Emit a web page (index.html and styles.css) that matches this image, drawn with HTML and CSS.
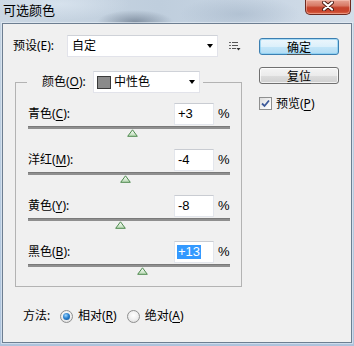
FILE: index.html
```html
<!DOCTYPE html>
<html lang="zh-CN">
<head>
<meta charset="utf-8">
<title>可选颜色</title>
<link rel="stylesheet" href="styles.css">
</head>
<body>
<div class="window">
  <div class="titlebar">
    <span class="title">可选颜色</span>
    <div class="close">
      <svg width="12" height="10" viewBox="0 0 12 10">
        <path d="M2 1.5 L10 8.5 M10 1.5 L2 8.5" stroke="#4a1a12" stroke-width="4" stroke-linecap="round"/>
        <path d="M2 1.5 L10 8.5 M10 1.5 L2 8.5" stroke="#ffffff" stroke-width="2.2" stroke-linecap="round"/>
      </svg>
    </div>
  </div>
  <div class="client">
    <div class="main">
      <div class="left">
        <div class="preset-row">
          <span class="preset-label">预设(E):</span>
          <div class="select preset-select"><span class="select-text">自定</span><span class="arrow"></span></div>
          <svg class="menu-icon" width="12" height="9" viewBox="0 0 12 9">
            <rect x="0" y="0" width="2" height="1" fill="#666"/><rect x="3" y="0" width="6" height="1" fill="#555"/>
            <rect x="0" y="3" width="2" height="1" fill="#666"/><rect x="3" y="3" width="6" height="1" fill="#555"/>
            <rect x="0" y="6" width="2" height="1" fill="#666"/><rect x="3" y="6" width="4" height="1" fill="#555"/>
            <path d="M7.5 6 L11.5 6 L9.5 8.5 Z" fill="#333"/>
          </svg>
        </div>
        <fieldset class="group">
          <legend class="group-legend">
            <span class="legend-label">颜色(<u>O</u>):</span>
            <div class="select color-select">
              <span class="swatch"></span><span class="select-text">中性色</span><span class="arrow"></span>
            </div>
          </legend>
          <div class="row">
            <div class="row-top"><span class="row-label">青色(<u>C</u>):</span><div class="num">+3</div><span class="pct">%</span></div>
            <div class="track"></div>
            <svg class="thumb" style="margin-left:98.5px" width="11" height="8" viewBox="0 0 11 8"><defs><linearGradient id="g1" x1="0" y1="0" x2="0" y2="1"><stop offset="0" stop-color="#ffffff"/><stop offset="1" stop-color="#b7d9b2"/></linearGradient></defs><path d="M5.5 0.8 L10.3 7.3 L0.7 7.3 Z" fill="url(#g1)" stroke="#4f8a4f" stroke-width="1"/></svg>
          </div>
          <div class="row">
            <div class="row-top"><span class="row-label">洋红(<u>M</u>):</span><div class="num">-4</div><span class="pct">%</span></div>
            <div class="track"></div>
            <svg class="thumb" style="margin-left:91.5px" width="11" height="8" viewBox="0 0 11 8"><path d="M5.5 0.8 L10.3 7.3 L0.7 7.3 Z" fill="url(#g1)" stroke="#4f8a4f" stroke-width="1"/></svg>
          </div>
          <div class="row">
            <div class="row-top"><span class="row-label">黄色(<u>Y</u>):</span><div class="num">-8</div><span class="pct">%</span></div>
            <div class="track"></div>
            <svg class="thumb" style="margin-left:87.4px" width="11" height="8" viewBox="0 0 11 8"><path d="M5.5 0.8 L10.3 7.3 L0.7 7.3 Z" fill="url(#g1)" stroke="#4f8a4f" stroke-width="1"/></svg>
          </div>
          <div class="row last">
            <div class="row-top"><span class="row-label">黑色(<u>B</u>):</span><div class="num"><span class="sel">+13</span></div><span class="pct">%</span></div>
            <div class="track"></div>
            <svg class="thumb" style="margin-left:108.6px" width="11" height="8" viewBox="0 0 11 8"><path d="M5.5 0.8 L10.3 7.3 L0.7 7.3 Z" fill="url(#g1)" stroke="#4f8a4f" stroke-width="1"/></svg>
          </div>
        </fieldset>
        <div class="method">
          <span class="method-label">方法:</span>
          <span class="radio checked"><span class="dot"></span></span>
          <span class="radio-label">相对(<u>R</u>)</span>
          <span class="radio"></span>
          <span class="radio-label">绝对(<u>A</u>)</span>
        </div>
      </div>
      <div class="right">
        <div class="btn default"><span class="btn-text">确定</span></div>
        <div class="btn"><span class="btn-text">复位</span></div>
        <div class="check-row">
          <span class="checkbox">
            <svg width="9" height="9" viewBox="0 0 9 9"><path d="M1 4.5 L3.5 7 L8 1.5" fill="none" stroke="#3d5a9a" stroke-width="1.8"/></svg>
          </span>
          <span class="check-label">预览(<u>P</u>)</span>
        </div>
      </div>
    </div>
  </div>
</div>
</body>
</html>
```

FILE: styles.css
```css
* { box-sizing: border-box; }
body {
  margin: 0;
  background: #b8cbe0;
  font-family: "Noto Sans", "Noto Sans CJK SC", sans-serif;
  font-size: 12px;
  color: #000;
}
u { text-decoration: underline; text-underline-offset: 2px; }
.window {
  width: 354px;
  height: 346px;
  display: flex;
  flex-direction: column;
  background: linear-gradient(180deg, #c6d4e2 0%, #b9cce0 50%, #adc3dc 100%);
  overflow: hidden;
}
.titlebar {
  height: 23px;
  flex: none;
  display: flex;
  align-items: flex-start;
  background:
    radial-gradient(ellipse 38px 12px at 135px 22px, rgba(80,95,115,0.55), transparent),
    radial-gradient(ellipse 70px 16px at 60px 4px, rgba(225,235,245,0.6), transparent),
    radial-gradient(ellipse 60px 18px at 240px 14px, rgba(140,160,182,0.35), transparent),
    linear-gradient(90deg, #cbd7e3 0%, #bfcedd 45%, #c9d6e4 75%, #d3dee9 100%);
}
.title {
  margin: 2px 0 0 3px;
  font-family: "Noto Sans CJK SC", sans-serif;
  font-size: 13px;
  line-height: 16px;
  color: #000;
}
.close {
  margin-left: auto;
  margin-right: 3px;
  width: 46px;
  height: 15px;
  border: 1px solid #6e2a20;
  border-top: none;
  border-radius: 0 0 5px 5px;
  background: linear-gradient(180deg, #e7a595 0%, #d87a66 40%, #c6442d 55%, #c9442c 80%, #dd6a4a 100%);
  box-shadow: inset 0 0 0 1px rgba(255,210,200,0.45);
  display: flex;
  align-items: center;
  justify-content: center;
  padding-bottom: 2px;
}
.client {
  flex: none;
  width: 350px;
  height: 320px;
  margin: 0 2px;
  background: #f0f0f0;
  border: 1px solid #6d7e91;
  box-shadow: 0 0 0 1px rgba(235,242,250,0.55);
  padding: 11px 12px 0 10px;
}
.main { display: flex; gap: 16px; }
.left { width: 231px; }
.right {
  width: 80px;
  padding-top: 3px;
  display: flex;
  flex-direction: column;
}
.preset-row {
  display: flex;
  align-items: center;
  height: 22px;
}
.preset-label { width: 54px; line-height: 16px; }
.select {
  height: 22px;
  background: #fff;
  border: 1px solid #e2e3ea;
  border-top-color: #cfd2d8;
  display: flex;
  align-items: center;
  padding-left: 4px;
}
.preset-select { width: 151px; }
.select-text { flex: 1; line-height: 16px; }
.arrow {
  width: 0;
  height: 0;
  border-left: 3.5px solid transparent;
  border-right: 3.5px solid transparent;
  border-top: 4px solid #000;
  margin-right: 4px;
}
.menu-icon { margin-left: 11px; margin-top: 1px; }
.group {
  margin: 14px 0 0 2px;
  width: 227px;
  min-width: 0;
  border: 1px solid #b3b3b3;
  padding: 10px 11px 11px 12px;
}
.group-legend {
  margin-left: -1px;
  padding: 0 3px 0 15px;
  display: flex;
  align-items: center;
  height: 22px;
}
.legend-label { width: 51px; line-height: 16px; }
.color-select { width: 107px; padding-left: 3px; }
.swatch {
  width: 14px;
  height: 13px;
  background: #8a8a8a;
  border: 1px solid #3a3a3a;
  margin-right: 3px;
}
.row { margin-bottom: 12px; }
.row.last { margin-bottom: 0; }
.row-top {
  display: flex;
  align-items: center;
  height: 22px;
}
.row-label { flex: 1; line-height: 16px; }
.num {
  width: 40px;
  height: 22px;
  background: #fff;
  border: 1px solid #e3e6ec;
  border-top-color: #c9ccd2;
  padding-left: 3px;
  font-family: "Liberation Sans", sans-serif;
  font-size: 13px;
  line-height: 20px;
}
.sel {
  background: #3399ff;
  color: #fff;
  display: inline-block;
  line-height: 14px;
  padding: 0 1px;
  margin-left: -1px;
}
.pct {
  width: 12px;
  margin-left: 4px;
  font-family: "Liberation Sans", sans-serif;
  font-size: 13px;
  line-height: 16px;
}
.track {
  margin-top: 1px;
  height: 3px;
  background: #8f8f8f;
  border-top: 1px solid #7a7a7a;
}
.thumb { display: block; }
.method {
  margin-top: 21px;
  padding-left: 10px;
  display: flex;
  align-items: center;
  height: 16px;
}
.method-label { width: 30px; line-height: 16px; }
.radio {
  width: 13px;
  height: 13px;
  border-radius: 50%;
  border: 1px solid #8e8f8f;
  background: radial-gradient(circle at 50% 40%, #ffffff 0%, #f0f0f0 50%, #d6d6d6 100%);
  display: flex;
  align-items: center;
  justify-content: center;
  margin-left: 10px;
}
.radio.checked { margin-left: 7px; }
.dot {
  width: 7px;
  height: 7px;
  border-radius: 50%;
  background: radial-gradient(circle at 40% 35%, #9fd6ff 0%, #2b82cf 45%, #0d4b8f 100%);
}
.radio-label { margin-left: 5px; line-height: 16px; }
.btn {
  width: 80px;
  height: 17px;
  border: 1px solid #707070;
  border-radius: 3px;
  background: linear-gradient(180deg, #f4f4f4 0%, #ebebeb 50%, #dddddd 51%, #cfcfcf 100%);
  box-shadow: inset 0 0 0 1px rgba(255,255,255,0.7);
  display: flex;
  align-items: center;
  justify-content: center;
}
.btn.default {
  border-color: #3c7fb1;
  background: linear-gradient(180deg, #ecf6fc 0%, #dcf0fb 50%, #c4e6f9 51%, #b1dbf3 100%);
  box-shadow: inset 0 0 0 1px rgba(120,200,240,0.6);
}
.btn + .btn { margin-top: 12px; }
.btn-text {
  line-height: 14px;
  font-family: "Noto Sans CJK SC", sans-serif;
  text-decoration: underline;
  text-underline-offset: 2px;
  text-decoration-color: #555;
}
.check-row {
  margin-top: 13px;
  display: flex;
  align-items: center;
  height: 13px;
}
.checkbox {
  width: 13px;
  height: 13px;
  border: 1px solid #8e8f8f;
  background: linear-gradient(135deg, #dcdcdc 0%, #f5f5f5 60%, #ffffff 100%);
  display: flex;
  align-items: center;
  justify-content: center;
}
.check-label { margin-left: 4px; line-height: 16px; }
```
